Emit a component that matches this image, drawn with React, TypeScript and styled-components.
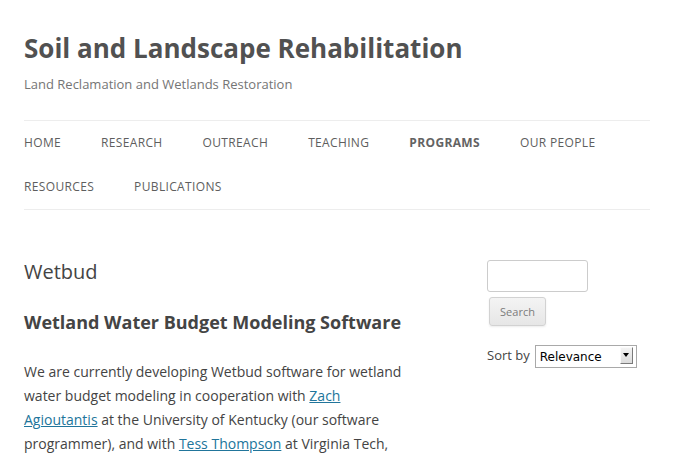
import React from "react";
import styled, { createGlobalStyle } from "styled-components";

const Global = createGlobalStyle`
  html, body { margin: 0; padding: 0; background: #fff; }
  body {
    font-family: "Open Sans", "Liberation Sans", sans-serif;
    color: #444;
    font-size: 14px;
    line-height: 24px;
  }
  * { box-sizing: border-box; }
`;

const Page = styled.div`
  padding: 0 24px;
`;

const Header = styled.header`
  padding: 24px 0;
`;

const SiteTitle = styled.h1`
  margin: 0;
  font-size: 26px;
  line-height: 48px;
  font-weight: 700;
  color: #515151;
`;

const Tagline = styled.h2`
  margin: 0;
  font-size: 13px;
  line-height: 24px;
  font-weight: 400;
  color: #757575;
`;

const Nav = styled.nav`
  margin-top: 24px;
  border-top: 1px solid #ededed;
  border-bottom: 1px solid #ededed;
`;

const Menu = styled.ul`
  list-style: none;
  margin: 0;
  padding: 0;
  display: flex;
  flex-wrap: wrap;
`;

const MenuItem = styled.li<{ $current?: boolean }>`
  margin-right: 40px;
  font-size: 12px;
  line-height: 44px;
  letter-spacing: 0.35px;
  text-transform: uppercase;
  color: ${(p) => (p.$current ? "#636363" : "#5e5e5e")};
  font-weight: ${(p) => (p.$current ? 700 : 400)};
  white-space: nowrap;
`;

const Main = styled.div`
  display: flex;
  justify-content: space-between;
  align-items: flex-start;
  padding-top: 24px;
`;

const Content = styled.article`
  width: 393px;
  padding-top: 2px;
`;

const EntryTitle = styled.h1`
  margin: 0 0 24px;
  font-size: 20px;
  line-height: 24px;
  font-weight: 400;
  color: #444;
`;

const SubHeading = styled.h2`
  margin: 0 0 23px;
  font-size: 18px;
  line-height: 28.8px;
  font-weight: 700;
  color: #444;
`;

const Para = styled.p`
  margin: 0 0 24px;
  font-size: 14px;
  line-height: 24px;
  color: #444;
`;

const Link = styled.a`
  color: #21759b;
  text-decoration: underline;
`;

const Sidebar = styled.aside`
  width: 26.04%;
  padding-top: 2px;
  display: flex;
  flex-direction: column;
  align-items: flex-start;
`;

const SearchForm = styled.form`
  display: flex;
  flex-direction: column;
  align-items: flex-start;
  gap: 5px;
`;

const SearchInput = styled.input`
  width: 101px;
  height: 32px;
  padding: 6px;
  border: 1px solid #ccc;
  border-radius: 3px;
  font-family: inherit;
  font-size: 12px;
  background: #fff;
`;

const SearchButton = styled.button`
  margin-left: 2px;
  width: 57px;
  height: 29px;
  padding: 0;
  font-family: "Open Sans", sans-serif;
  font-size: 11px;
  line-height: 1;
  color: #7c7c7c;
  background: linear-gradient(to bottom, #f4f4f4, #e6e6e6);
  border: 1px solid #d2d2d2;
  border-radius: 3px;
  box-shadow: 0 1px 2px rgba(64, 64, 64, 0.1);
`;

const SortRow = styled.div`
  margin-top: 17px;
  display: flex;
  align-items: center;
  gap: 5px;
  font-size: 13px;
  color: #444;
`;

const SelectWrap = styled.div`
  position: relative;
  width: 102px;
  height: 23px;
`;

const Select = styled.select`
  appearance: none;
  -webkit-appearance: none;
  width: 100%;
  height: 100%;
  margin: 0;
  padding: 0 18px 0 4px;
  border: 1px solid #a9a9a9;
  border-radius: 0;
  background: #fff;
  font-family: "DejaVu Sans", sans-serif;
  font-size: 12px;
  color: #000;
`;

const Arrow = styled.span`
  position: absolute;
  right: 4px;
  top: 3px;
  width: 13px;
  height: 17px;
  pointer-events: none;
  background: linear-gradient(to bottom, #f2f2f2, #dcdcdc);
  border: 1px solid;
  border-color: #fafafa #7a7a7a #7a7a7a #fafafa;
  display: flex;
  align-items: center;
  justify-content: center;
  &::after {
    content: "";
    width: 0;
    height: 0;
    border-left: 3.5px solid transparent;
    border-right: 3.5px solid transparent;
    border-top: 4px solid #000;
  }
`;

const navItems = [
  "Home",
  "Research",
  "Outreach",
  "Teaching",
  "Programs",
  "Our People",
  "Resources",
  "Publications",
];

export default function App() {
  return (
    <>
      <Global />
      <Page>
        <Header>
          <SiteTitle>Soil and Landscape Rehabilitation</SiteTitle>
          <Tagline>Land Reclamation and Wetlands Restoration</Tagline>
          <Nav>
            <Menu>
              {navItems.map((n) => (
                <MenuItem key={n} $current={n === "Programs"}>
                  {n}
                </MenuItem>
              ))}
            </Menu>
          </Nav>
        </Header>
        <Main>
          <Content>
            <EntryTitle>Wetbud</EntryTitle>
            <SubHeading>Wetland Water Budget Modeling Software</SubHeading>
            <Para>
              We are currently developing Wetbud software for wetland water
              budget modeling in cooperation with{" "}
              <Link href="#">Zach Agioutantis</Link> at the University of
              Kentucky (our software programmer), and with{" "}
              <Link href="#">Tess Thompson</Link> at Virginia Tech,{" "}
              <Link href="#">Rich Whittecar</Link> at Old Dominion University,
              and others.
            </Para>
          </Content>
          <Sidebar>
            <SearchForm onSubmit={(e) => e.preventDefault()}>
              <SearchInput type="text" />
              <SearchButton type="submit">Search</SearchButton>
            </SearchForm>
            <SortRow>
              <span>Sort by</span>
              <SelectWrap>
                <Select defaultValue="relevance">
                  <option value="relevance">Relevance</option>
                  <option value="date">Date</option>
                </Select>
                <Arrow />
              </SelectWrap>
            </SortRow>
          </Sidebar>
        </Main>
      </Page>
    </>
  );
}
